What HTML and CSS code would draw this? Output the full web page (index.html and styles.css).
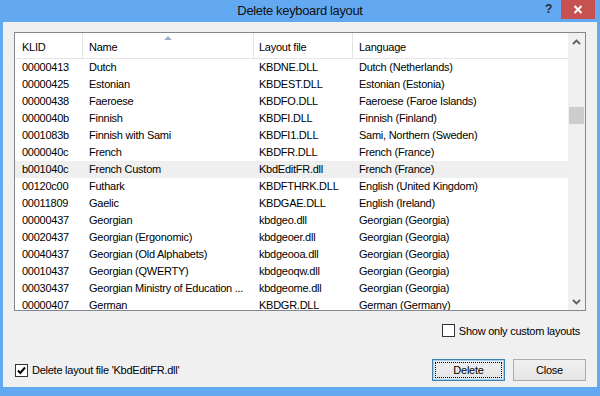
FILE: index.html
```html
<!DOCTYPE html>
<html lang="en">
<head>
  <meta charset="UTF-8">
  <title>Delete keyboard layout</title>
  <link rel="stylesheet" href="styles.css">
</head>
<body>

  <div class="window">
    <div class="titlebar">
      <span></span>
      <span class="title">Delete keyboard layout</span>
      <div class="controls">
        <span class="help">?</span>
        <span class="close">
          <svg width="10" height="9" viewBox="0 0 10 9"><path d="M1.5 1 L8.5 8 M8.5 1 L1.5 8" stroke="#fff" stroke-width="2"/></svg>
        </span>
      </div>
    </div>

    <div class="client">
      <div class="listview">
        <div class="grid">
          <div class="header">
            <div class="cell c1">KLID</div>
            <div class="cell c2 sorted">Name</div>
            <div class="cell c3">Layout file</div>
            <div class="cell c4">Language</div>
          </div>
          <div class="rows">
            <div class="row"><div class="cell c1">00000413</div><div class="cell c2">Dutch</div><div class="cell c3">KBDNE.DLL</div><div class="cell c4">Dutch (Netherlands)</div></div>
            <div class="row"><div class="cell c1">00000425</div><div class="cell c2">Estonian</div><div class="cell c3">KBDEST.DLL</div><div class="cell c4">Estonian (Estonia)</div></div>
            <div class="row"><div class="cell c1">00000438</div><div class="cell c2">Faeroese</div><div class="cell c3">KBDFO.DLL</div><div class="cell c4">Faeroese (Faroe Islands)</div></div>
            <div class="row"><div class="cell c1">0000040b</div><div class="cell c2">Finnish</div><div class="cell c3">KBDFI.DLL</div><div class="cell c4">Finnish (Finland)</div></div>
            <div class="row"><div class="cell c1">0001083b</div><div class="cell c2">Finnish with Sami</div><div class="cell c3">KBDFI1.DLL</div><div class="cell c4">Sami, Northern (Sweden)</div></div>
            <div class="row"><div class="cell c1">0000040c</div><div class="cell c2">French</div><div class="cell c3">KBDFR.DLL</div><div class="cell c4">French (France)</div></div>
            <div class="row selected"><div class="cell c1">b001040c</div><div class="cell c2">French Custom</div><div class="cell c3">KbdEditFR.dll</div><div class="cell c4">French (France)</div></div>
            <div class="row"><div class="cell c1">00120c00</div><div class="cell c2">Futhark</div><div class="cell c3">KBDFTHRK.DLL</div><div class="cell c4">English (United Kingdom)</div></div>
            <div class="row"><div class="cell c1">00011809</div><div class="cell c2">Gaelic</div><div class="cell c3">KBDGAE.DLL</div><div class="cell c4">English (Ireland)</div></div>
            <div class="row"><div class="cell c1">00000437</div><div class="cell c2">Georgian</div><div class="cell c3">kbdgeo.dll</div><div class="cell c4">Georgian (Georgia)</div></div>
            <div class="row"><div class="cell c1">00020437</div><div class="cell c2">Georgian (Ergonomic)</div><div class="cell c3">kbdgeoer.dll</div><div class="cell c4">Georgian (Georgia)</div></div>
            <div class="row"><div class="cell c1">00040437</div><div class="cell c2">Georgian (Old Alphabets)</div><div class="cell c3">kbdgeooa.dll</div><div class="cell c4">Georgian (Georgia)</div></div>
            <div class="row"><div class="cell c1">00010437</div><div class="cell c2">Georgian (QWERTY)</div><div class="cell c3">kbdgeoqw.dll</div><div class="cell c4">Georgian (Georgia)</div></div>
            <div class="row"><div class="cell c1">00030437</div><div class="cell c2">Georgian Ministry of Education ...</div><div class="cell c3">kbdgeome.dll</div><div class="cell c4">Georgian (Georgia)</div></div>
            <div class="row"><div class="cell c1">00000407</div><div class="cell c2">German</div><div class="cell c3">KBDGR.DLL</div><div class="cell c4">German (Germany)</div></div>
          </div>
        </div>

        <div class="vscroll">
          <div class="arrow">
            <svg width="9" height="6" viewBox="0 0 9 6"><polyline points="1,5 4.5,1.5 8,5" fill="none" stroke="#606060" stroke-width="1.8"/></svg>
          </div>
          <div class="track"><div class="thumb"></div></div>
          <div class="arrow">
            <svg width="9" height="6" viewBox="0 0 9 6"><polyline points="1,1 4.5,4.5 8,1" fill="none" stroke="#606060" stroke-width="1.8"/></svg>
          </div>
        </div>
      </div>

      <div class="filter-row">
        <label class="check">
          <span class="box"></span>
          Show only custom layouts
        </label>
      </div>

      <div class="footer">
        <label class="check">
          <span class="box">
            <svg width="11" height="11" viewBox="0 0 11 11"><polyline points="2,5.5 4.3,8 9,2.5" fill="none" stroke="#000" stroke-width="2"/></svg>
          </span>
          Delete layout file 'KbdEditFR.dll'
        </label>
        <button class="btn default"><span class="focus">Delete</span></button>
        <button class="btn">Close</button>
      </div>
    </div>
  </div>

</body>
</html>
```

FILE: styles.css
```css
body {
  margin: 0;
  font-family: "Liberation Sans", Arial, sans-serif;
  font-size: 11px;
  letter-spacing: -0.25px;
  color: #000000;
}

.window {
  width: 600px;
  height: 396px;
  box-sizing: border-box;
  background-color: #63a9f2;
  padding: 0 3px 9px 3px;
  display: flex;
  flex-direction: column;
}

/* title bar */
.titlebar {
  height: 22px;
  display: grid;
  grid-template-columns: 1fr auto 1fr;
  align-items: start;
  margin: 0 -3px;
}

.title {
  font-size: 13px;
  letter-spacing: -0.35px;
  line-height: 22px;
  color: #111111;
}

.controls {
  display: flex;
  justify-content: flex-end;
  align-items: flex-start;
  padding-right: 5px;
}

.help {
  font-weight: bold;
  font-size: 12px;
  color: #1e2a3a;
  line-height: 18px;
  margin-right: 9px;
}

.close {
  width: 34px;
  height: 19px;
  background-color: #c75050;
  display: flex;
  align-items: center;
  justify-content: center;
}

/* client area */
.client {
  flex: 1;
  background-color: #f0f0f0;
  padding: 10px 11px 6px 11px;
  display: flex;
  flex-direction: column;
}

.listview {
  height: 279px;
  box-sizing: border-box;
  border: 1px solid #828790;
  background-color: #ffffff;
  display: flex;
  overflow: hidden;
}

.grid {
  flex: 1;
  overflow: hidden;
}

.header,
.row {
  display: grid;
  grid-template-columns: 67px 171px 99px 1fr;
}

.header {
  height: 25px;
  border-bottom: 1px solid #e5e5e5;
}

.header .cell {
  padding-top: 3px;
  display: flex;
  align-items: center;
}

.header .c2,
.header .c3,
.header .c4 {
  border-left: 1px solid #e5e5e5;
}

.cell {
  white-space: nowrap;
  overflow: hidden;
}

.c1 { padding-left: 7px; }
.c2 { padding-left: 7px; }
.c3 { padding-left: 6px; }
.c4 { padding-left: 7px; }

.header .c2 { padding-left: 6px; }
.header .c3 { padding-left: 5px; }
.header .c4 { padding-left: 6px; }

.sorted {
  position: relative;
}

.sorted::before {
  content: "";
  position: absolute;
  top: 3px;
  left: 50%;
  margin-left: -4px;
  border-left: 4px solid transparent;
  border-right: 4px solid transparent;
  border-bottom: 4px solid #9fb0c6;
}

.row {
  height: 17px;
  line-height: 17px;
}

.row.selected {
  background-color: #efefef;
}

/* scroll bar */
.vscroll {
  width: 17px;
  background-color: #f0f0f0;
  display: flex;
  flex-direction: column;
}

.arrow {
  height: 17px;
  display: flex;
  align-items: center;
  justify-content: center;
}

.track {
  flex: 1;
}

.thumb {
  margin: 57px 1px 0 1px;
  height: 17px;
  background-color: #cdcdcd;
}

/* checkboxes */
.check {
  display: flex;
  align-items: center;
  gap: 4px;
  height: 13px;
}

.box {
  width: 13px;
  height: 13px;
  box-sizing: border-box;
  border: 1px solid #333333;
  background-color: #ffffff;
  display: flex;
  align-items: center;
  justify-content: center;
}

.filter-row {
  margin-top: 13px;
  display: flex;
  justify-content: flex-end;
  padding-right: 6px;
}

.footer {
  margin-top: 22px;
  display: flex;
  align-items: center;
  gap: 8px;
  padding-left: 1px;
}

.footer .check {
  margin-right: auto;
}

.btn {
  width: 73px;
  height: 22px;
  padding: 0;
  font-family: inherit;
  font-size: 11px;
  letter-spacing: -0.25px;
  color: #000000;
  border: 1px solid #acacac;
  background: linear-gradient(#f0f0f0, #e5e5e5);
  display: flex;
  align-items: center;
  justify-content: center;
}

.btn.default {
  border-color: #3c7fb1;
  box-shadow: inset 0 0 0 1px #a6d2f5;
}

.focus {
  flex: 1;
  align-self: stretch;
  margin: 2px;
  border: 1px dotted #000000;
  display: flex;
  align-items: center;
  justify-content: center;
}
```
